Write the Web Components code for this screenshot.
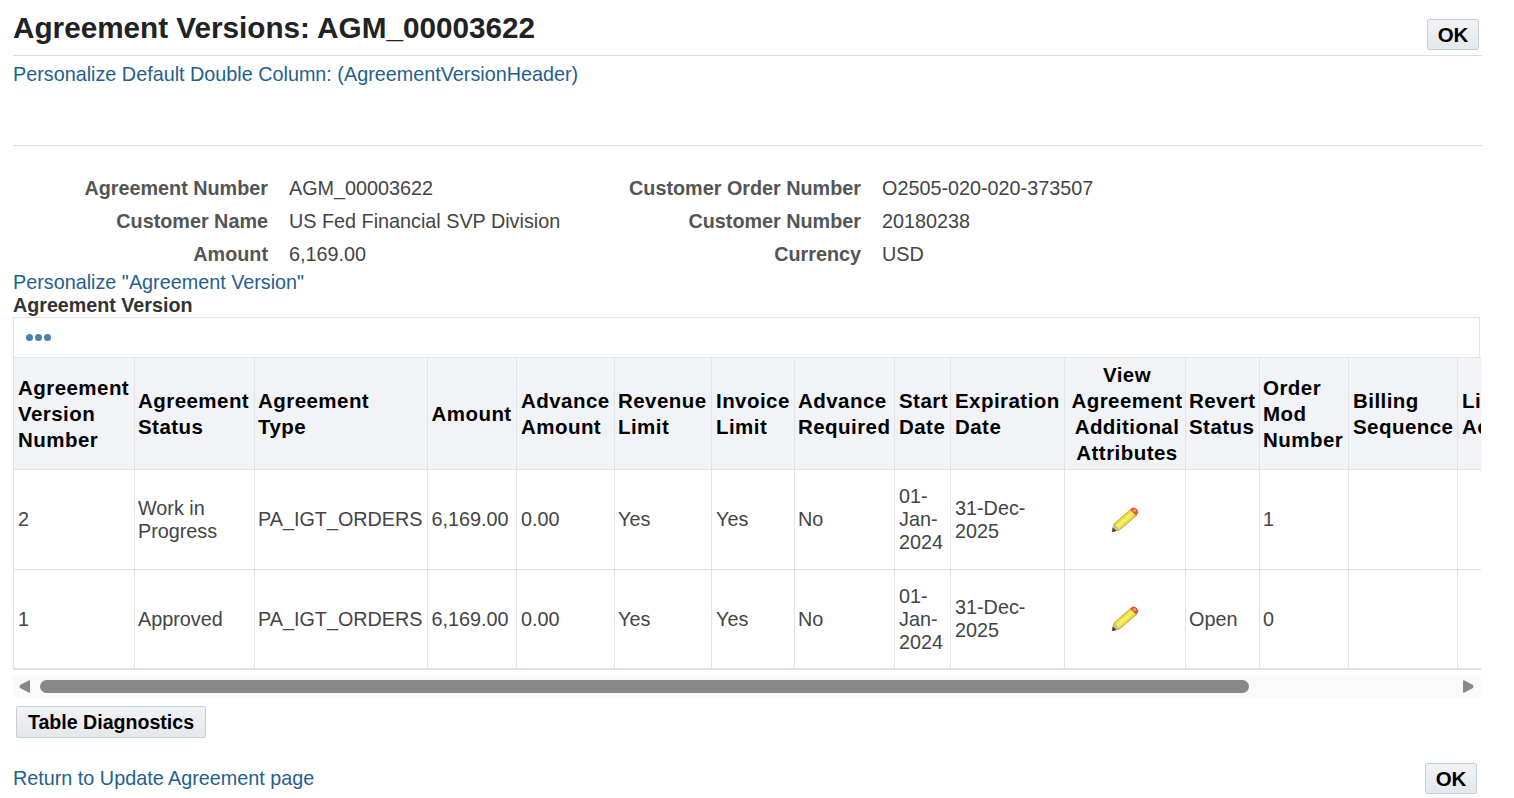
<!DOCTYPE html>
<html lang="en">
<head>
<meta charset="utf-8">
<title>Agreement Versions</title>
<style>
    html, body { margin: 0; background: #fff; }
    body { font-family: "Liberation Sans", Arial, sans-serif; overflow: hidden; }
</style>
</head>
<body>
<ebs-page>
    <ebs-title-bar>
        Agreement Versions: AGM_00003622
        <ebs-button slot="action">OK</ebs-button>
    </ebs-title-bar>
    <ebs-link class="first">Personalize Default Double Column: (AgreementVersionHeader)</ebs-link>
    <ebs-details></ebs-details>
    <ebs-link>Personalize "Agreement Version"</ebs-link>
    <ebs-section-title>Agreement Version</ebs-section-title>
    <ebs-table></ebs-table>
    <ebs-scrollbar></ebs-scrollbar>
    <ebs-button class="diag">Table Diagnostics</ebs-button>
    <ebs-footer>
        <ebs-link>Return to Update Agreement page</ebs-link>
        <ebs-button slot="action">OK</ebs-button>
    </ebs-footer>
</ebs-page>

<script>
class EbsPage extends HTMLElement {
    constructor() {
        super();
        this.attachShadow({ mode: 'open' });
    }

    connectedCallback() {
        this.shadowRoot.innerHTML = `
            <style>
                :host {
                    display: block;
                    width: 1469px;
                    height: 798px;
                    padding-left: 13px;
                    color: #333;
                }
                ::slotted(ebs-link.first) { height: 82px; margin-top: 7px; }
                ::slotted(ebs-button.diag) {
                    width: 190px;
                    height: 32px;
                    margin: 9px 0 0 3px;
                    font-size: 19.6px;
                }
            </style>
            <slot></slot>
        `;
    }
}

class EbsTitleBar extends HTMLElement {
    constructor() {
        super();
        this.attachShadow({ mode: 'open' });
    }

    connectedCallback() {
        this.shadowRoot.innerHTML = `
            <style>
                :host {
                    display: flex;
                    justify-content: space-between;
                    align-items: flex-start;
                    box-sizing: border-box;
                    height: 56px;
                    border-bottom: 1px solid #dcdcdc;
                    padding: 10px 3px 0 0;
                    color: #222;
                    font-size: 29.7px;
                    font-weight: bold;
                    line-height: 35px;
                }
                .text { display: block; }
                ::slotted(ebs-button) { margin-top: 9px; }
            </style>
            <span class="text"><slot></slot></span>
            <slot name="action"></slot>
        `;
    }
}

class EbsLink extends HTMLElement {
    constructor() {
        super();
        this.attachShadow({ mode: 'open' });
    }

    connectedCallback() {
        this.shadowRoot.innerHTML = `
            <style>
                :host {
                    display: block;
                    color: #23608f;
                    font-size: 19.8px;
                    line-height: 23px;
                    white-space: nowrap;
                }
            </style>
            <slot></slot>
        `;
    }
}

class EbsButton extends HTMLElement {
    constructor() {
        super();
        this.attachShadow({ mode: 'open' });
    }

    connectedCallback() {
        this.shadowRoot.innerHTML = `
            <style>
                :host {
                    display: inline-flex;
                    align-items: center;
                    justify-content: center;
                    box-sizing: border-box;
                    width: 52px;
                    height: 31px;
                    border: 1px solid #c4ced7;
                    border-radius: 2px;
                    background: linear-gradient(#f1f3f5, #e4e8eb);
                    color: #000;
                    font-size: 20.5px;
                    font-weight: bold;
                    white-space: nowrap;
                }
            </style>
            <slot></slot>
        `;
    }
}

class EbsDetails extends HTMLElement {
    constructor() {
        super();
        this.attachShadow({ mode: 'open' });
    }

    connectedCallback() {
        const rows = [
            ['Agreement Number', 'AGM_00003622', 'Customer Order Number', 'O2505-020-020-373507'],
            ['Customer Name', 'US Fed Financial SVP Division', 'Customer Number', '20180238'],
            ['Amount', '6,169.00', 'Currency', 'USD']
        ];
        const cells = rows.map(row => row.map((text, i) =>
            `<div class="${i % 2 ? 'value' : 'label'}">${text}</div>`).join('')).join('');

        this.shadowRoot.innerHTML = `
            <style>
                :host {
                    display: grid;
                    grid-template-columns: 255px 340px 253px 1fr;
                    grid-auto-rows: 33px;
                    align-items: center;
                    border-top: 1px solid #dcdcdc;
                    box-sizing: border-box;
                    height: 126px;
                    padding-top: 26px;
                    font-size: 19.8px;
                    color: #444;
                }
                .label {
                    text-align: right;
                    font-weight: bold;
                    color: #555;
                    white-space: nowrap;
                }
                .value { padding-left: 21px; white-space: nowrap; }
            </style>
            ${cells}
        `;
    }
}

class EbsSectionTitle extends HTMLElement {
    constructor() {
        super();
        this.attachShadow({ mode: 'open' });
    }

    connectedCallback() {
        this.shadowRoot.innerHTML = `
            <style>
                :host {
                    display: block;
                    color: #333;
                    font-size: 19.7px;
                    font-weight: bold;
                    line-height: 23px;
                    height: 23px;
                }
            </style>
            <slot></slot>
        `;
    }
}

class EbsPencil extends HTMLElement {
    constructor() {
        super();
        this.attachShadow({ mode: 'open' });
    }

    connectedCallback() {
        this.shadowRoot.innerHTML = `
            <style>
                :host { display: inline-block; width: 28px; height: 26px; line-height: 0; }
            </style>
            <svg width="28" height="26" viewBox="0 0 28 26">
                <path d="M1 24.5 L3 17 L19.5 2.5 L25.5 8.5 L8.5 23 Z" fill="#efd93a" stroke="#a8983a" stroke-width=".8"/>
                <path d="M5 18.5 L20.5 4.5 L23 7 L7.5 21 Z" fill="#f8ee66"/>
                <path d="M1 24.5 L3 17 L8.5 23 Z" fill="#cdbb90"/>
                <path d="M1 25 L1.8 20.5 L5.5 24 Z" fill="#3c3c3c"/>
                <path d="M19 2.6 L21.5 .8 Q24 0 26 2.2 Q28 4.6 26.8 6.8 L25.2 8.6 Z" fill="#e4572e"/>
                <circle cx="23.5" cy="3.4" r="1.5" fill="#f0a080"/>
            </svg>
        `;
    }
}

class EbsTable extends HTMLElement {
    constructor() {
        super();
        this.attachShadow({ mode: 'open' });
    }

    connectedCallback() {
        const widths = [121, 120, 173, 89, 98, 97, 83, 100, 56, 114, 121, 74, 89, 109, 60];
        const pads = [4, 3, 3, 3.5, 4, 3, 4, 3, 4, 4, 4, 3, 3, 4, 4];
        const heads = ['Agreement Version Number', 'Agreement Status', 'Agreement<br>Type', 'Amount',
            'Advance Amount', 'Revenue Limit', 'Invoice Limit', 'Advance Required', 'Start Date',
            'Expiration Date', 'View Agreement Additional Attributes', 'Revert Status',
            'Order Mod Number', 'Billing Sequence', 'Li<br>Ac'];
        const rows = [
            ['2', 'Work in Progress', 'PA_IGT_ORDERS', '6,169.00', '0.00', 'Yes', 'Yes', 'No', '01-Jan-2024', '31-Dec-2025', '', '', '1', '', ''],
            ['1', 'Approved', 'PA_IGT_ORDERS', '6,169.00', '0.00', 'Yes', 'Yes', 'No', '01-Jan-2024', '31-Dec-2025', '', 'Open', '0', '', '']
        ];
        const cols = widths.map(w => `<col style="width:${w}px">`).join('');
        const headCells = heads.map((h, i) =>
            `<th class="${i === 10 ? 'mid' : ''}" style="padding-left:${pads[i]}px">${h}</th>`).join('');
        const bodyRows = rows.map(row => `<tr>${row.map((c, i) =>
            i === 10 ? '<td class="mid"><ebs-pencil></ebs-pencil></td>' : `<td style="padding-left:${pads[i]}px">${c}</td>`).join('')}</tr>`).join('');

        this.shadowRoot.innerHTML = `
            <style>
                :host {
                    display: block;
                    width: 1468px;
                    overflow: hidden;
                    border-bottom: 2px solid #dfe3e8;
                    box-sizing: border-box;
                    height: 353px;
                }
                .toolbar {
                    display: flex;
                    align-items: center;
                    box-sizing: border-box;
                    width: 1467px;
                    height: 40px;
                    padding-left: 12px;
                    gap: 2px;
                    border: 1px solid #e1e5e9;
                    border-bottom: 0;
                }
                .toolbar i {
                    width: 7px;
                    height: 7px;
                    border-radius: 50%;
                    background: #4a7fb0;
                }
                table {
                    table-layout: fixed;
                    width: 1382px;
                    border-collapse: separate;
                    border-spacing: 0;
                    border-left: 1px solid #dfe3e8;
                    border-top: 1px solid #dfe3e8;
                }
                th, td {
                    box-sizing: border-box;
                    padding: 0 2px 0 4px;
                    border-right: 1px solid #dfe3e8;
                    border-bottom: 1px solid #dfe3e8;
                    text-align: left;
                    vertical-align: middle;
                    overflow: hidden;
                }
                th {
                    height: 112px;
                    background: #f1f3f7;
                    color: #000;
                    font-size: 20.5px;
                    letter-spacing: .45px;
                    line-height: 26px;
                }
                td {
                    height: 100px;
                    color: #444;
                    font-size: 19.8px;
                    line-height: 23px;
                }
                tr:last-child td { border-bottom: 0; height: 98px; }
                .mid { text-align: center; padding: 0; }
                ebs-pencil { vertical-align: middle; }
            </style>
            <div class="toolbar"><i></i><i></i><i></i></div>
            <table>
                <colgroup>${cols}</colgroup>
                <thead><tr>${headCells}</tr></thead>
                <tbody>${bodyRows}</tbody>
            </table>
        `;
    }
}

class EbsScrollbar extends HTMLElement {
    constructor() {
        super();
        this.attachShadow({ mode: 'open' });
    }

    connectedCallback() {
        this.shadowRoot.innerHTML = `
            <style>
                :host {
                    display: flex;
                    align-items: center;
                    box-sizing: border-box;
                    width: 1468px;
                    height: 21px;
                    margin-top: 6px;
                    padding: 0 7px 0 6px;
                    background: #fafafa;
                }
                svg { display: block; flex: none; }
                .right { margin-left: auto; }
                .thumb {
                    width: 1209px;
                    height: 13px;
                    margin-left: 10px;
                    border-radius: 7px;
                    background: #888;
                }
            </style>
            <svg width="11" height="13" viewBox="0 0 11 13"><path d="M11 1 Q11 0 9.5 .5 L1 5 Q0 6.5 1 8 L9.5 12.5 Q11 13 11 12 Z" fill="#888"/></svg>
            <div class="thumb"></div>
            <svg class="right" width="11" height="13" viewBox="0 0 11 13"><path d="M0 1 Q0 0 1.5 .5 L10 5 Q11 6.5 10 8 L1.5 12.5 Q0 13 0 12 Z" fill="#888"/></svg>
        `;
    }
}

class EbsFooter extends HTMLElement {
    constructor() {
        super();
        this.attachShadow({ mode: 'open' });
    }

    connectedCallback() {
        this.shadowRoot.innerHTML = `
            <style>
                :host {
                    display: flex;
                    justify-content: space-between;
                    align-items: center;
                    width: 1464px;
                    height: 33px;
                    margin-top: 24px;
                }
            </style>
            <slot></slot>
            <slot name="action"></slot>
        `;
    }
}

customElements.define('ebs-page', EbsPage);
customElements.define('ebs-title-bar', EbsTitleBar);
customElements.define('ebs-link', EbsLink);
customElements.define('ebs-button', EbsButton);
customElements.define('ebs-details', EbsDetails);
customElements.define('ebs-section-title', EbsSectionTitle);
customElements.define('ebs-pencil', EbsPencil);
customElements.define('ebs-table', EbsTable);
customElements.define('ebs-scrollbar', EbsScrollbar);
customElements.define('ebs-footer', EbsFooter);
</script>
</body>
</html>
